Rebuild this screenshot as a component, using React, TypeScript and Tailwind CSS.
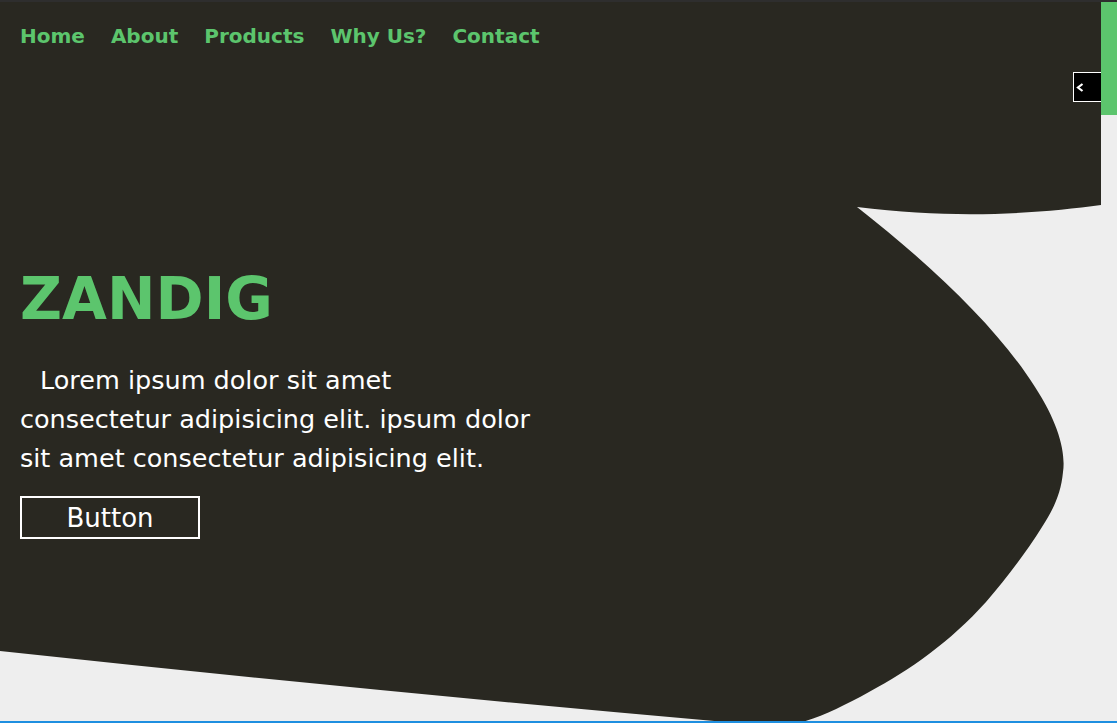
import React from "react";

const font = { fontFamily: '"Comic Sans MS", "DejaVu Sans", sans-serif' };

export default function App() {
  return (
    <div
      className="relative w-[1117px] h-[723px] overflow-hidden bg-[#eeeeee] border-t-2 border-t-[#2e2e2e] border-b-2 border-b-[#1e8fe0] flex"
      style={font}
    >
      <svg
        className="absolute left-0 top-0"
        width="1117"
        height="723"
        viewBox="0 0 1117 723"
      >
        <path
          d="M0,0 H1101 V203 C1040,211 960,218 857,205 C940,270 1000,330 1035,385 C1058,420 1066,450 1063,470 C1061,492 1053,508 1042,525 C1025,552 1005,578 986,600 C950,640 910,668 869,690 C840,706 815,718 790,723 L760,723 Q380,690 0,649 Z"
          fill="#292821"
        />
      </svg>

      <div className="relative flex-1 flex flex-col">
        <nav className="flex gap-[26px] pl-[20px] pt-[19px] text-[20px] font-bold text-[#5cc56d] leading-[30px]">
          <a>Home</a>
          <a>About</a>
          <a>Products</a>
          <a>Why Us?</a>
          <a>Contact</a>
        </nav>

        <div className="pl-[20px] pt-[216px] w-[600px]">
          <h1 className="text-[58px] font-bold text-[#5cc56d] leading-[64px]">ZANDIG</h1>
          <p className="mt-[30px] text-[25.5px] text-white leading-[39px] indent-[20px]">
            Lorem ipsum dolor sit amet
            <br />
            consectetur adipisicing elit. ipsum dolor
            <br />
            sit amet consectetur adipisicing elit.
          </p>
          <button className="mt-[18px] w-[180px] h-[43px] border-2 border-white text-white text-[26px] leading-none">
            Button
          </button>
        </div>

        <div className="absolute right-0 top-[70px] w-[28px] h-[30px] bg-black border border-r-0 border-white flex items-center pl-[2px]">
          <svg width="8" height="9" viewBox="0 0 8 9">
            <polyline points="6.5,1 2,4.5 6.5,8" fill="none" stroke="white" strokeWidth="2.2" />
          </svg>
        </div>
      </div>

      <div className="relative w-[16px] flex flex-col">
        <div className="h-[113px] bg-[#5cc56d]" />
      </div>
    </div>
  );
}
